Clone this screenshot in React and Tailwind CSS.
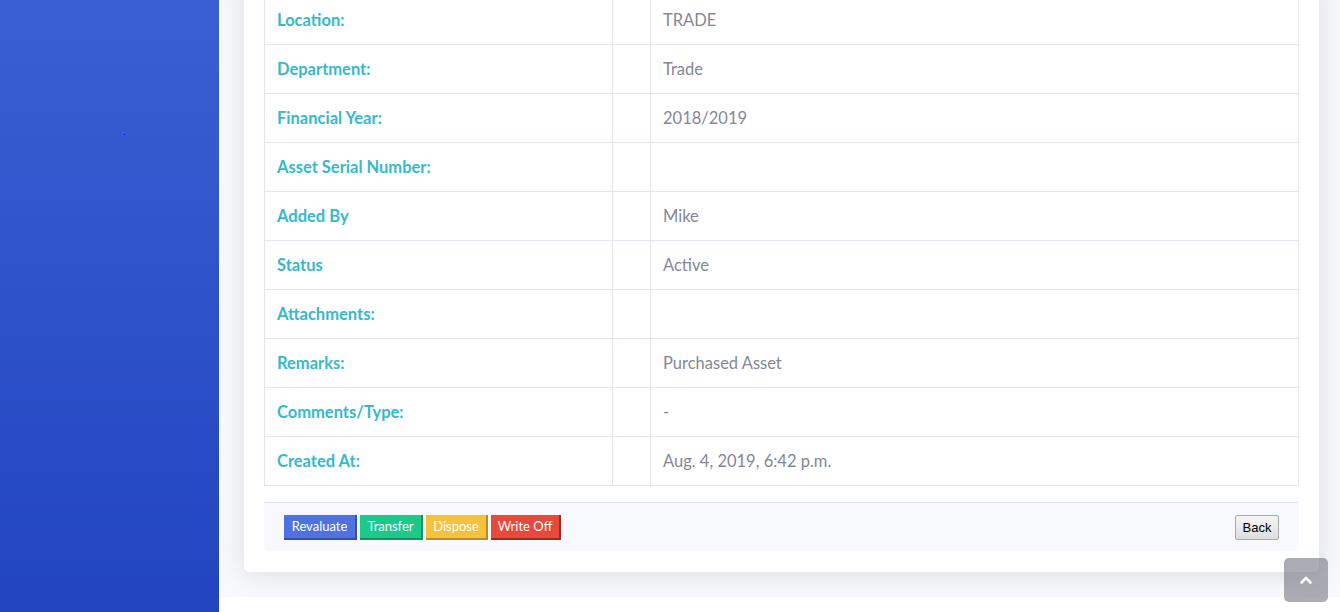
import React from 'react';

const rows = [
  ['Location:', 'TRADE'],
  ['Department:', 'Trade'],
  ['Financial Year:', '2018/2019'],
  ['Asset Serial Number:', ''],
  ['Added By', 'Mike'],
  ['Status', 'Active'],
  ['Attachments:', ''],
  ['Remarks:', 'Purchased Asset'],
  ['Comments/Type:', '-'],
  ['Created At:', 'Aug. 4, 2019, 6:42 p.m.'],
];

export default function App() {
  return (
    <div className="relative h-[612px] w-[1340px] overflow-hidden flex" style={{ fontFamily: 'Lato, "Open Sans", sans-serif' }}>
      {/* sidebar */}
      <div className="relative w-[219px] shrink-0 bg-gradient-to-b from-[#3a5fd4] to-[#2244c0]">
        <div className="absolute left-[124px] top-[134px] w-px h-px bg-[#0000ff]"></div>
      </div>

      {/* content */}
      <div className="flex-1 flex flex-col bg-white">
        <div className="h-[597px] bg-[#f8f9fc] flex flex-col justify-end overflow-hidden pl-[25px] pr-[21px] pb-[25px]">
          <div className="shrink-0 bg-white rounded-[5px] shadow-[0_2px_28px_rgba(58,59,69,0.15)] px-5 pt-5 pb-[21px]">
            <table className="w-full border-collapse text-[16.5px]">
              <tbody>
                {rows.map(([label, value]) => (
                  <tr key={label}>
                    <td className="w-[348px] border border-[#e3e6f0] px-3 py-3 leading-6 font-bold text-[#36b9cc]">{label}</td>
                    <td className="w-[38px] border border-[#e3e6f0]"></td>
                    <td className="border border-[#e3e6f0] px-3 py-3 leading-6 text-[#858796]">{value}</td>
                  </tr>
                ))}
              </tbody>
            </table>

            <div className="mt-4 bg-[#f8f9fc] border-t border-[#e3e6f0] rounded-b-[5px] px-5 pt-[12px] pb-[11px] flex items-center justify-between">
              <div className="flex gap-[3px] text-[13px] text-white">
                <button className="h-[25px] w-[73px] bg-[#4e73df] border-r-2 border-b-2 border-[#3451b0]">Revaluate</button>
                <button className="h-[25px] w-[63px] bg-[#1cc88a] border-r-2 border-b-2 border-[#13915f]">Transfer</button>
                <button className="h-[25px] w-[62px] bg-[#f6c23e] border-r-2 border-b-2 border-[#b88e24]">Dispose</button>
                <button className="h-[25px] w-[70px] bg-[#e74a3b] border-r-2 border-b-2 border-[#a32a20]">Write Off</button>
              </div>
              <button
                className="h-[25px] w-[44px] text-[13px] text-black border border-[#a9a9a9] rounded-[2px] bg-gradient-to-b from-[#f6f6f6] to-[#dedede]"
                style={{ fontFamily: '"Liberation Sans", Arial, sans-serif' }}
              >
                Back
              </button>
            </div>
          </div>
        </div>
      </div>

      {/* scroll to top */}
      <div className="absolute right-[12px] bottom-[10px] w-[44px] h-[44px] rounded-[5px] bg-[rgba(90,92,105,0.5)] flex items-center justify-center">
        <svg width="12" height="8" viewBox="0 0 12 8" fill="none">
          <path d="M1.5 6.5 L6 2 L10.5 6.5" stroke="white" strokeWidth="2.6" strokeLinecap="round" strokeLinejoin="round" />
        </svg>
      </div>
    </div>
  );
}
